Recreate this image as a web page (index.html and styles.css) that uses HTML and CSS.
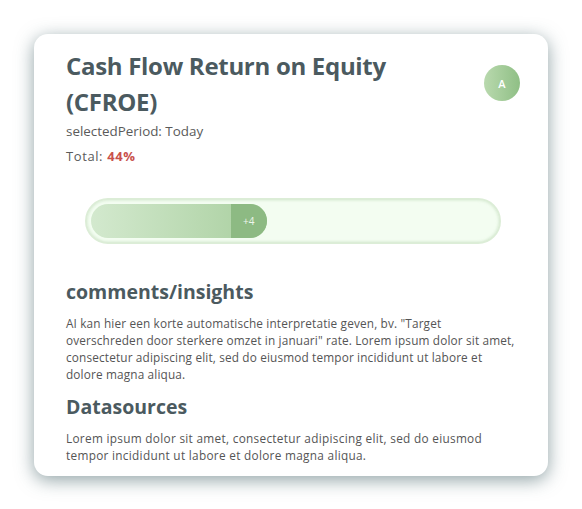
FILE: index.html
```html
<!DOCTYPE html>
<html lang="nl">
<head>
  <meta charset="UTF-8">
  <meta name="viewport" content="width=device-width, initial-scale=1">
  <title>CFROE</title>
  <link rel="stylesheet" href="styles.css">
</head>
<body>
  <div class="card">
    <div class="card-head">
      <div class="head-text">
        <h2>Cash Flow Return on Equity (CFROE)</h2>
        <p class="period">selectedPeriod: Today</p>
        <p class="total">Total: <strong>44%</strong></p>
      </div>
      <div class="avatar">A</div>
    </div>

    <div class="progress">
      <div class="progress-fill" style="width: 43.5%">
        <span class="progress-step">+4</span>
      </div>
    </div>

    <h3>comments/insights</h3>
    <p class="text">AI kan hier een korte automatische interpretatie geven, bv. "Target overschreden door sterkere omzet in januari" rate. Lorem ipsum dolor sit amet, consectetur adipiscing elit, sed do eiusmod tempor incididunt ut labore et dolore magna aliqua.</p>

    <h3>Datasources</h3>
    <p class="text sources">Lorem ipsum dolor sit amet, consectetur adipiscing elit, sed do eiusmod tempor incididunt ut labore et dolore magna aliqua.</p>
  </div>
</body>
</html>
```

FILE: styles.css
```css
body {
  font-family: "Open Sans", sans-serif;
  margin: 0;
  padding: 34px;
  background: #fff;
  color: #555;
}
.card {
  background: #fff;
  border-radius: 14px;
  padding: 14px 28px 12px 32px;
  box-shadow: 0 4px 18px rgba(70, 100, 105, 0.6);
}
.card-head {
  display: flex;
  align-items: flex-start;
  gap: 60px;
}
.head-text {
  flex: 1;
}
h2 {
  font-size: 24px;
  line-height: 36px;
  font-weight: 700;
  letter-spacing: -0.3px;
  color: #4b5a5f;
  margin: 0;
}
.period {
  font-size: 13.4px;
  margin: 2px 0 0;
  color: #5a5a5a;
}
.total {
  font-size: 13px;
  letter-spacing: 0.6px;
  margin: 7px 0 0;
  color: #5a5a5a;
}
.total strong {
  color: #c9514c;
}
.avatar {
  width: 36px;
  height: 36px;
  margin-top: 17px;
  border-radius: 50%;
  background: linear-gradient(to right, #b9d9ae, #8fbf85);
  color: #fff;
  font-size: 11px;
  font-weight: 600;
  display: flex;
  justify-content: center;
  align-items: center;
}
.progress {
  margin: 33px 19px 0;
  height: 34px;
  padding: 4px;
  border: 2px solid #dcedd7;
  border-radius: 23px;
  background: #f3fdf1;
  box-shadow: inset 0 0 3px rgba(150, 190, 140, 0.4);
}
.progress-fill {
  height: 100%;
  border-radius: 17px;
  background: linear-gradient(to right, #d3e9ce, #a9cf9f);
  display: flex;
  justify-content: flex-end;
  overflow: hidden;
}
.progress-step {
  width: 36px;
  background: #8dba83;
  color: #eef6ec;
  font-size: 10px;
  display: flex;
  justify-content: center;
  align-items: center;
}
h3 {
  font-size: 19.5px;
  font-weight: 700;
  color: #4b5a5f;
  margin: 34px 0 0;
}
.text {
  font-size: 11.8px;
  letter-spacing: 0.15px;
  line-height: 17px;
  margin: 10px 0 0;
  color: #555;
}
.text.sources {
  letter-spacing: 0.3px;
}
.text + h3 {
  margin-top: 10px;
}
```
